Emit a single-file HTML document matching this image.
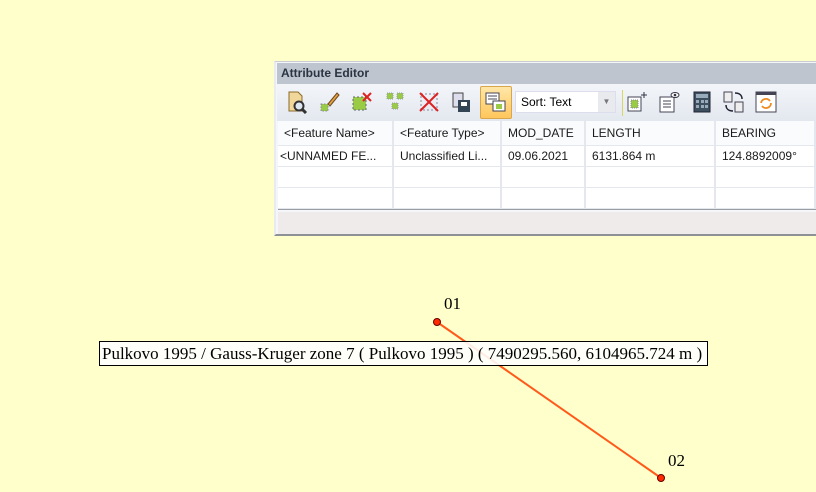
<!DOCTYPE html>
<html><head><meta charset="utf-8"><style>
*{margin:0;padding:0;box-sizing:border-box}
body{width:816px;height:492px;background:#ffffcc;position:relative;overflow:hidden;font-family:"Liberation Sans",sans-serif}
#panel{position:absolute;left:274px;top:61px;width:542px;height:175px;background:#f4f6fa;border-left:2px solid #e8ebf0;border-top:1px solid #c8ccd2;border-bottom:2px solid #8e9196}
#title{position:absolute;left:1px;top:1px;right:0;height:21px;background:#bec5cf;font-size:12px;font-weight:bold;color:#2a3442;line-height:21px;padding-left:4px}
#tb{position:absolute;left:1px;top:22px;right:0;height:37px;background:linear-gradient(#f3f5f9,#e3e8ef)}
.ic{position:absolute;top:6px;width:24px;height:24px}
#grid{position:absolute;left:2px;top:59px;right:0;height:89px;background:#fff;border-bottom:2px solid #9a9da2}
.r{position:absolute;left:0;right:0;height:21px;border-bottom:1px solid #e4e8ee;font-size:12px;color:#1a1a1a;line-height:21px}
.c{position:absolute;top:0;height:100%;border-right:2px solid #e4e8ee;padding-left:6px;white-space:nowrap;overflow:hidden}
#status{position:absolute;left:2px;top:150px;right:0;height:22px;background:#efebea}
#lbl{position:absolute;left:99px;top:341px;width:609px;height:25px;border:1px solid #000;background:rgba(255,255,255,0.88);font-family:"Liberation Serif",serif;font-size:17px;line-height:23px;padding-left:2px;white-space:nowrap;color:#000}
.pt{position:absolute;font-family:"Liberation Serif",serif;font-size:17px;color:#000}
</style></head><body>
<svg style="position:absolute;left:0;top:0" width="816" height="492">
<line x1="437" y1="322" x2="661" y2="478" stroke="#ff5a1a" stroke-width="2"/>
<circle cx="437" cy="322" r="3.5" fill="#ff2a00" stroke="#600" stroke-width="1"/>
<circle cx="661" cy="478" r="3.5" fill="#ff2a00" stroke="#600" stroke-width="1"/>
</svg>
<div class="pt" style="left:444px;top:294px">01</div>
<div class="pt" style="left:668px;top:451px">02</div>
<div id="lbl">Pulkovo 1995 / Gauss-Kruger zone 7 ( Pulkovo 1995 ) ( 7490295.560, 6104965.724 m )</div>

<div id="panel">
<div id="title">Attribute Editor</div>
<div id="tb">
<svg class="ic" style="left:9px" viewBox="0 0 24 24"><path d="M3 2h9l4 4v15H3z" fill="#f2d79a" stroke="#8a6a2a"/><circle cx="13" cy="16" r="4.5" fill="#dfe8f0" stroke="#333" stroke-width="2"/><path d="M16 19l4 4" stroke="#333" stroke-width="3"/></svg>
<svg class="ic" style="left:41px" viewBox="0 0 24 24"><rect x="3" y="14" width="7" height="7" fill="#9c4" stroke="#889" stroke-dasharray="1.5"/><path d="M10 14l9-11 2 2-9 11z" fill="#e8a040" stroke="#6a4a20"/></svg>
<svg class="ic" style="left:73px" viewBox="0 0 24 24"><rect x="3" y="7" width="13" height="13" fill="#9c4" stroke="#667" stroke-dasharray="2"/><path d="M13 3l8 8M21 3l-8 8" stroke="#d22" stroke-width="2"/></svg>
<svg class="ic" style="left:107px" viewBox="0 0 24 24"><rect x="3" y="3" width="6" height="6" fill="#9c4" stroke="#99a" stroke-dasharray="1"/><rect x="13" y="3" width="6" height="6" fill="#9c4" stroke="#99a" stroke-dasharray="1"/><rect x="8" y="13" width="6" height="6" fill="#9c4" stroke="#99a" stroke-dasharray="1"/></svg>
<svg class="ic" style="left:140px" viewBox="0 0 24 24"><rect x="4" y="4" width="16" height="16" fill="none" stroke="#889" stroke-dasharray="2"/><path d="M3 3l18 18M21 3L3 21" stroke="#d22" stroke-width="2"/></svg>
<svg class="ic" style="left:172px" viewBox="0 0 24 24"><rect x="4" y="3" width="10" height="14" fill="#dde" stroke="#444"/><rect x="9" y="10" width="12" height="12" fill="#345" /><rect x="12" y="12" width="6" height="4" fill="#fff"/></svg>
<div style="position:absolute;left:203px;top:2px;width:32px;height:33px;background:linear-gradient(#ffe7a8,#ffc65c);border:1px solid #d9a64a;border-radius:2px"></div>
<svg class="ic" style="left:207px" viewBox="0 0 24 24"><rect x="2" y="3" width="13" height="11" fill="#fff" stroke="#445"/><path d="M4 6h9M4 9h9" stroke="#445"/><rect x="9" y="11" width="12" height="10" fill="#fff" stroke="#445"/><rect x="12" y="14" width="6" height="5" fill="#9c4"/></svg>
<div style="position:absolute;left:238px;top:7px;width:101px;height:22px;background:#fff;border:1px solid #dde;font-size:12px;line-height:20px;padding-left:5px">Sort: Text<div style="position:absolute;right:0;top:0;width:17px;height:20px;background:#e8eaee;color:#777;font-size:8px;text-align:center;line-height:20px">▼</div></div>
<div style="position:absolute;left:345px;top:6px;width:1px;height:26px;background:#d8d860"></div>
<svg class="ic" style="left:348px" viewBox="0 0 24 24"><rect x="3" y="7" width="13" height="14" fill="#fff" stroke="#445"/><rect x="6" y="10" width="7" height="8" fill="#9c4" stroke="#889" stroke-dasharray="1"/><path d="M19 2v6M16 5h6" stroke="#334"/></svg>
<svg class="ic" style="left:380px" viewBox="0 0 24 24"><rect x="3" y="7" width="14" height="15" fill="#fff" stroke="#445"/><path d="M6 11h8M6 14h8M6 17h8" stroke="#445"/><ellipse cx="18" cy="5" rx="4" ry="2.5" fill="#fff" stroke="#334"/><circle cx="18" cy="5" r="1.3" fill="#334"/></svg>
<svg class="ic" style="left:413px" viewBox="0 0 24 24"><rect x="4" y="2" width="16" height="20" fill="#3d5060" stroke="#223"/><rect x="6" y="4" width="12" height="4" fill="#9ab"/><path d="M6 10h3v3H6zM11 10h3v3h-3zM15 10h3v3h-3zM6 15h3v3H6zM11 15h3v3h-3zM15 15h3v3h-3z" fill="#9ab"/></svg>
<svg class="ic" style="left:445px" viewBox="0 0 24 24"><rect x="2" y="2" width="8" height="10" fill="#eee" stroke="#445"/><rect x="13" y="12" width="8" height="10" fill="#eee" stroke="#445"/><path d="M13 3c4 0 7 2 7 6M11 21c-4 0-7-2-7-6" fill="none" stroke="#223" stroke-width="1.5"/></svg>
<svg class="ic" style="left:477px" viewBox="0 0 24 24"><rect x="2" y="2" width="20" height="20" fill="#fff" stroke="#445"/><rect x="2" y="2" width="20" height="3" fill="#445"/><path d="M7 13a5 5 0 0 1 9-2M17 13a5 5 0 0 1-9 3" fill="none" stroke="#f08a20" stroke-width="1.8"/></svg>
</div>
<div id="grid">
<div class="r" style="top:0;height:25px;line-height:24px;background:#fafbfd">
<div class="c" style="left:0;width:116px">&lt;Feature Name&gt;</div><div class="c" style="left:116px;width:108px">&lt;Feature Type&gt;</div><div class="c" style="left:224px;width:84px">MOD_DATE</div><div class="c" style="left:308px;width:130px">LENGTH</div><div class="c" style="left:438px;width:100px">BEARING</div></div>
<div class="r" style="top:25px">
<div class="c" style="left:0;width:116px;padding-left:2px">&lt;UNNAMED FE...</div><div class="c" style="left:116px;width:108px">Unclassified Li...</div><div class="c" style="left:224px;width:84px">09.06.2021</div><div class="c" style="left:308px;width:130px">6131.864 m</div><div class="c" style="left:438px;width:100px">124.8892009°</div></div>
<div class="r" style="top:46px"><div class="c" style="left:0;width:116px"></div><div class="c" style="left:116px;width:108px"></div><div class="c" style="left:224px;width:84px"></div><div class="c" style="left:308px;width:130px"></div><div class="c" style="left:438px;width:100px"></div></div>
<div class="r" style="top:67px"><div class="c" style="left:0;width:116px"></div><div class="c" style="left:116px;width:108px"></div><div class="c" style="left:224px;width:84px"></div><div class="c" style="left:308px;width:130px"></div><div class="c" style="left:438px;width:100px"></div></div>
</div>
<div id="status"></div>
</div>
</body></html>
